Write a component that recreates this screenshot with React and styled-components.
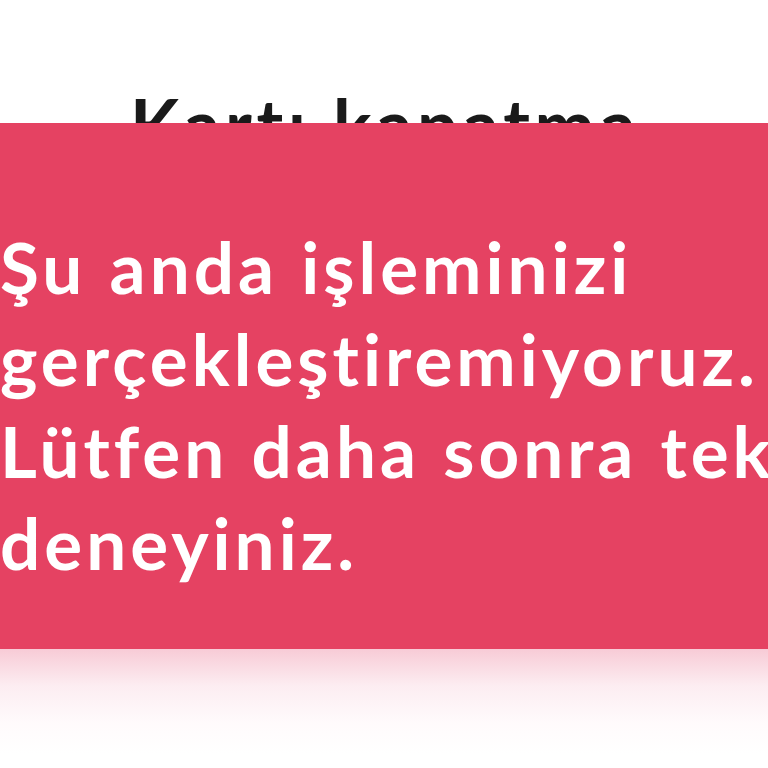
import React from 'react';
import styled, { createGlobalStyle } from 'styled-components';

const GlobalStyle = createGlobalStyle`
    html, body {
        margin: 0;
        padding: 0;
        background: #ffffff;
        overflow: hidden;
    }
    body {
        font-family: "Lato", "Noto Sans", sans-serif;
    }
`;

function App() {
    return (
        <Page>
            <GlobalStyle />
            <Header>
                <Title>Kartı kapatma</Title>
            </Header>
            <Toast role="alert">
                <Message>
                    Şu anda işleminizi gerçekleştiremiyoruz. Lütfen daha sonra tekrar deneyiniz.
                </Message>
            </Toast>
        </Page>
    )
}

export default App

const Page = styled.div`
    position: relative;
    width: 768px;
    height: 768px;
    overflow: hidden;
    background: #ffffff;
`;

const Header = styled.header`
    display: flex;
    justify-content: flex-start;
    padding: 84px 0 0 130px;
`;

const Title = styled.h1`
    margin: 0;
    font-size: 72px;
    font-weight: 700;
    line-height: 80px;
    color: #1a1a1a;
    letter-spacing: 4.6px;
    white-space: nowrap;
`;

const Toast = styled.div`
    position: absolute;
    top: 123px;
    left: 0;
    width: 1000px;
    height: 526px;
    background: #e54262;
    box-sizing: border-box;
    padding: 98px 0 0 0;

    &:after {
        content: "";
        position: absolute;
        left: 0;
        right: 0;
        top: 100%;
        height: 105px;
        background: linear-gradient(to bottom, rgba(246, 190, 204, 0.8), rgba(250, 222, 230, 0.55) 35%, rgba(255, 242, 246, 0.35) 70%, rgba(255, 255, 255, 0));
    }
`;

const Message = styled.p`
    margin: 0;
    width: 930px;
    font-size: 71px;
    font-weight: 700;
    line-height: 92px;
    color: #ffffff;
    letter-spacing: 4px;
    word-spacing: 2px;
`;
